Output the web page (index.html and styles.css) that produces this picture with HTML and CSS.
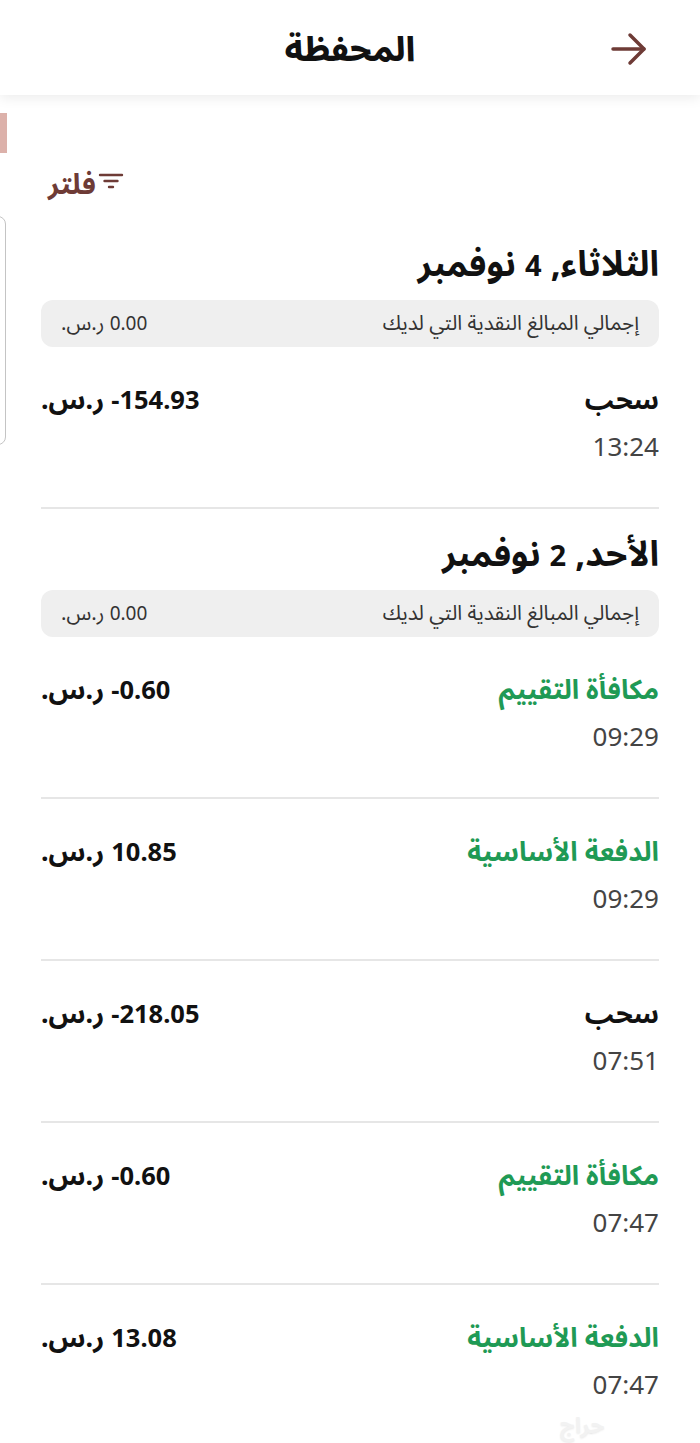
FILE: index.html
```html
<!DOCTYPE html>
<html lang="ar" dir="rtl">
<head>
  <meta charset="UTF-8" />
  <meta name="viewport" content="width=device-width, initial-scale=1" />
  <title>المحفظة</title>
  <link rel="stylesheet" href="styles.css">
</head>
<body>

  <header class="topbar">
    <a class="back" href="#">
      <svg width="36" height="34" viewBox="0 0 36 34" fill="none" stroke="#6e3b36" stroke-width="3.5" stroke-linecap="round" stroke-linejoin="round">
        <path d="M2 17 H33" />
        <path d="M19 3 L33 17 L19 31" />
      </svg>
    </a>
    <h1 class="title">المحفظة</h1>
    <span></span>
  </header>

  <!-- bits of the card behind, peeking from the edge -->
  <div class="peek-tab"></div>
  <div class="peek-card"></div>

  <main class="wallet">
    <div class="filter-row">
      <button class="filter">
        <svg width="26" height="20" viewBox="0 0 26 20" fill="none" stroke="#6e3b36" stroke-width="2.4" stroke-linecap="round">
          <path d="M2 4 H24" />
          <path d="M6.5 10 H19.5" />
          <path d="M11 16 H15" />
        </svg>
        <span>فلتر</span>
      </button>
    </div>

    <!-- Tuesday -->
    <section class="day">
      <h2 class="day-title">الثلاثاء, <span class="num">4</span> نوفمبر</h2>
      <div class="summary">
        <span>إجمالي المبالغ النقدية التي لديك</span>
        <span><span class="num">0.00</span> ر.س.</span>
      </div>
      <div class="tx">
        <div class="tx-info">
          <div class="tx-name">سحب</div>
          <div class="tx-time">13:24</div>
        </div>
        <div class="tx-amount"><span class="num">154.93-</span> ر.س.</div>
      </div>
    </section>

    <!-- Sunday -->
    <section class="day">
      <h2 class="day-title">الأحد, <span class="num">2</span> نوفمبر</h2>
      <div class="summary">
        <span>إجمالي المبالغ النقدية التي لديك</span>
        <span><span class="num">0.00</span> ر.س.</span>
      </div>
      <div class="tx">
        <div class="tx-info">
          <div class="tx-name green">مكافأة التقييم</div>
          <div class="tx-time">09:29</div>
        </div>
        <div class="tx-amount"><span class="num">0.60-</span> ر.س.</div>
      </div>
      <div class="tx">
        <div class="tx-info">
          <div class="tx-name green">الدفعة الأساسية</div>
          <div class="tx-time">09:29</div>
        </div>
        <div class="tx-amount"><span class="num">10.85</span> ر.س.</div>
      </div>
      <div class="tx">
        <div class="tx-info">
          <div class="tx-name">سحب</div>
          <div class="tx-time">07:51</div>
        </div>
        <div class="tx-amount"><span class="num">218.05-</span> ر.س.</div>
      </div>
      <div class="tx">
        <div class="tx-info">
          <div class="tx-name green">مكافأة التقييم</div>
          <div class="tx-time">07:47</div>
        </div>
        <div class="tx-amount"><span class="num">0.60-</span> ر.س.</div>
      </div>
      <div class="tx last">
        <div class="tx-info">
          <div class="tx-name green">الدفعة الأساسية</div>
          <div class="tx-time">07:47</div>
        </div>
        <div class="tx-amount"><span class="num">13.08</span> ر.س.</div>
      </div>
    </section>
  </main>

  <div class="watermark">حراج</div>

</body>
</html>
```

FILE: styles.css
```css
body {
  margin: 0;
  background-color: #fff;
  font-family: "Noto Sans", "Noto Sans Arabic", "DejaVu Sans", sans-serif;
  color: #111;
  position: relative;
  overflow: hidden;
}
.topbar {
  height: 95px;
  display: grid;
  grid-template-columns: 1fr auto 1fr;
  align-items: center;
  background-color: #fff;
  box-shadow: 0 3px 12px rgba(0,0,0,0.08);
  position: relative;
  z-index: 2;
}
.back {
  display: flex;
  padding-right: 53px;
  padding-top: 2px;
}
.title {
  margin: 0;
  font-size: 34px;
  font-weight: 800;
  line-height: 40px;
}
.peek-tab {
  position: absolute;
  left: 0;
  top: 113px;
  width: 7px;
  height: 40px;
  background-color: #dcb1aa;
}
.peek-card {
  position: absolute;
  left: -10px;
  top: 216px;
  width: 14px;
  height: 227px;
  border: 1px solid #c4c4c4;
  border-radius: 8px;
}
.wallet {
  padding: 68px 41px 0;
}
.num {
  font-size: 0.83em;
}
.filter-row {
  display: flex;
  justify-content: flex-end;
  padding-left: 7px;
}
.filter {
  display: flex;
  align-items: center;
  gap: 2px;
  padding: 0;
  border: none;
  background: none;
  font-family: inherit;
  font-size: 28px;
  font-weight: bold;
  line-height: 40px;
  color: #6e3b36;
}
.filter svg {
  margin-top: -4px;
}
.day-title {
  margin: 40px 0 15px;
  font-size: 35px;
  font-weight: bold;
  line-height: 40px;
}
.day + .day .day-title {
  margin-top: 24px;
}
.summary {
  height: 47px;
  display: flex;
  justify-content: space-between;
  align-items: center;
  padding: 0 20px;
  background-color: #efefef;
  border-radius: 12px;
  font-size: 20.5px;
  color: #333;
}
.summary .num {
  font-size: 19px;
}
.tx {
  display: flex;
  justify-content: space-between;
  align-items: flex-start;
  padding: 36px 0 45px;
  border-bottom: 2px solid #e6e6e6;
}
.tx.last {
  border-bottom: none;
}
.tx-name {
  font-size: 27px;
  font-weight: bold;
  line-height: 32px;
}
.tx-name.green {
  color: #1f9a55;
}
.tx-time {
  margin-top: 15px;
  font-size: 26px;
  line-height: 32px;
  color: #444;
}
.tx-amount {
  font-size: 27px;
  font-weight: bold;
  line-height: 32px;
}
.tx-amount .num {
  font-size: 25.5px;
}
.watermark {
  position: absolute;
  left: 560px;
  top: 1410px;
  font-size: 22px;
  line-height: 28px;
  font-weight: bold;
  color: #f2f2f2;
  text-shadow: 0 1px 2px rgba(0,0,0,0.08);
}
```
